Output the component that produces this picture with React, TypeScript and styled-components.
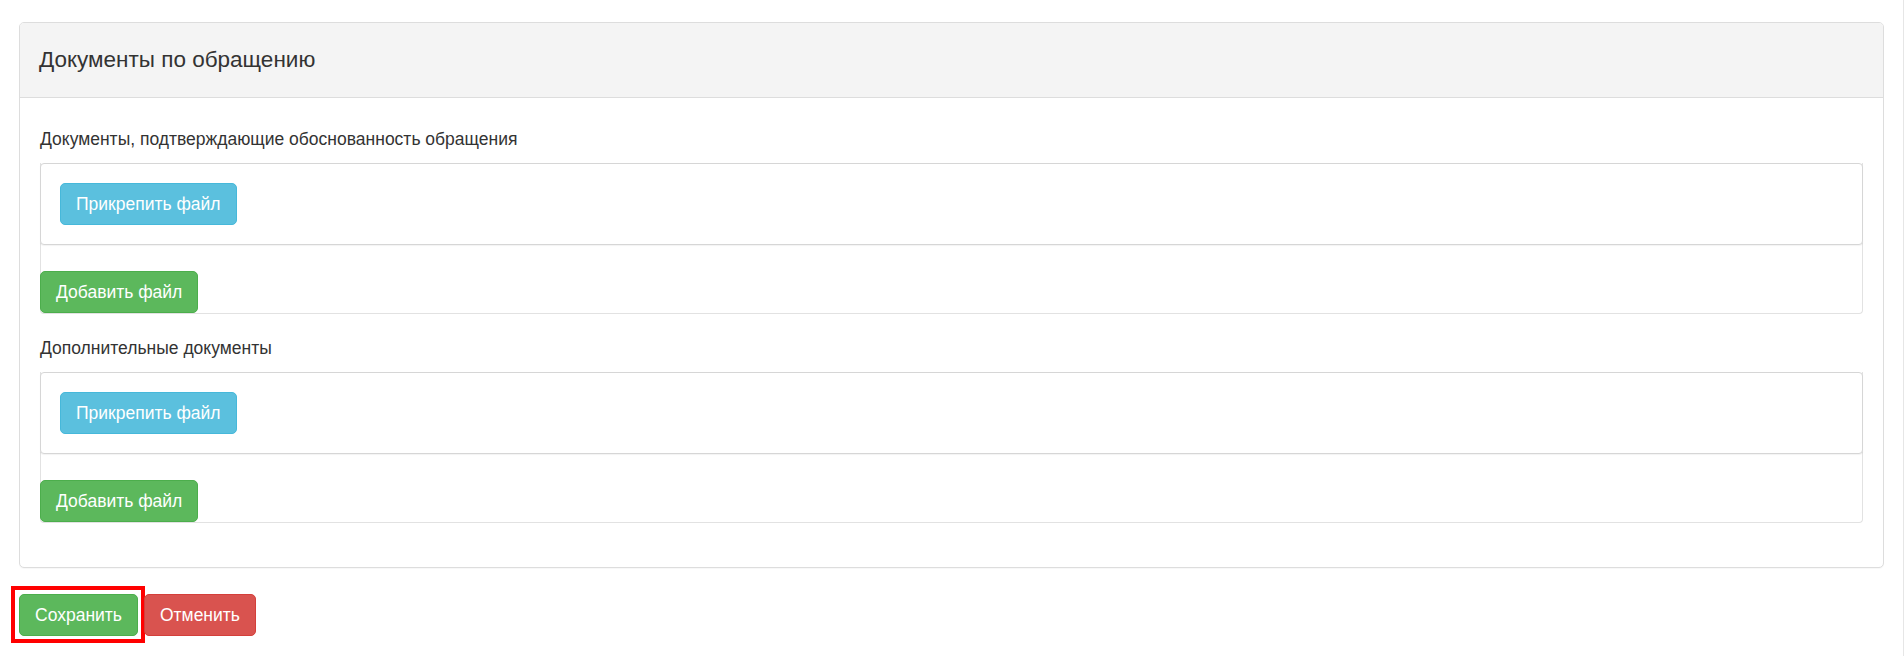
import React from "react";
import styled, { createGlobalStyle, css } from "styled-components";

const GlobalStyle = createGlobalStyle`
  html, body {
    margin: 0;
    padding: 0;
    background: #ffffff;
  }
  body {
    font-family: "Liberation Sans", Arial, Helvetica, sans-serif;
    font-size: 17.5px;
    line-height: 25px;
    color: #333333;
  }
  * { box-sizing: border-box; }
`;

const Page = styled.div`
  width: 1904px;
  min-height: 656px;
  padding: 22px 19px 0 19px;
  border-right: 1px solid #e6e6e6;
`;

const Panel = styled.section`
  border: 1px solid #dddddd;
  border-radius: 5px;
  background: #ffffff;
  margin-bottom: 26px;
  box-shadow: 0 1px 1px rgba(0, 0, 0, 0.03);
`;

const PanelHeading = styled.header`
  height: 75px;
  padding: 25px 19px 0 19px;
  background: #f4f4f4;
  border-bottom: 1px solid #dddddd;
  border-radius: 4px 4px 0 0;
`;

const PanelTitle = styled.h3`
  margin: 0;
  font-size: 22.5px;
  line-height: 24.75px;
  font-weight: 400;
  color: #333333;
`;

const PanelBody = styled.div`
  padding: 29px 20px 44px 20px;
  display: flex;
  flex-direction: column;
  gap: 22px;
`;

const FormGroup = styled.div`
  display: flex;
  flex-direction: column;
`;

const Label = styled.label`
  display: block;
  font-weight: 400;
  line-height: 25px;
  margin-bottom: 11px;
`;

const FileGroup = styled.div`
  border: 1px solid #e2e2e2;
  border-top: none;
  border-radius: 0 0 4px 4px;
  display: flex;
  flex-direction: column;
  align-items: flex-start;
`;

const AttachBox = styled.div`
  align-self: stretch;
  margin: 0 -1px;
  padding: 19px;
  border: 1px solid #d6d6d6;
  border-radius: 4px;
  background: #ffffff;
  box-shadow: 0 1px 1px rgba(0, 0, 0, 0.05);
`;

type Variant = "info" | "success" | "danger";

const variants: Record<Variant, ReturnType<typeof css>> = {
  info: css`
    background: #5bc0de;
    border-color: #46b8da;
  `,
  success: css`
    background: #5cb85c;
    border-color: #4cae4c;
  `,
  danger: css`
    background: #d9534f;
    border-color: #d43f3a;
  `,
};

const Button = styled.button<{ $variant: Variant; $marked?: boolean; $flush?: boolean }>`
  position: relative;
  display: inline-block;
  font-family: "Liberation Sans", Arial, Helvetica, sans-serif;
  font-size: 17.5px;
  line-height: 25px;
  font-weight: 400;
  padding: 7.5px 15px;
  border: 1px solid transparent;
  border-radius: 5px;
  color: #ffffff;
  cursor: pointer;
  white-space: nowrap;
  ${(p) => variants[p.$variant]}
  ${(p) =>
    p.$marked &&
    css`
      &::after {
        content: "";
        position: absolute;
        top: -9px;
        left: -9px;
        right: -8px;
        bottom: -8px;
        border: 4px solid #ff0000;
        pointer-events: none;
      }
    `}
  ${(p) =>
    p.$flush &&
    css`
      margin-left: -1px;
      margin-top: 26px;
    `}
`;

const Actions = styled.div`
  display: flex;
  gap: 6px;
  align-items: center;
`;

const sections = [
  "Документы, подтверждающие обоснованность обращения",
  "Дополнительные документы",
];

export default function App() {
  return (
    <>
      <GlobalStyle />
      <Page>
        <Panel>
          <PanelHeading>
            <PanelTitle>Документы по обращению</PanelTitle>
          </PanelHeading>
          <PanelBody>
            {sections.map((title) => (
              <FormGroup key={title}>
                <Label>{title}</Label>
                <FileGroup>
                  <AttachBox>
                    <Button $variant="info">Прикрепить файл</Button>
                  </AttachBox>
                  <Button $variant="success" $flush>
                    Добавить файл
                  </Button>
                </FileGroup>
              </FormGroup>
            ))}
          </PanelBody>
        </Panel>
        <Actions>
          <Button $variant="success" $marked>
            Сохранить
          </Button>
          <Button $variant="danger">Отменить</Button>
        </Actions>
      </Page>
    </>
  );
}
